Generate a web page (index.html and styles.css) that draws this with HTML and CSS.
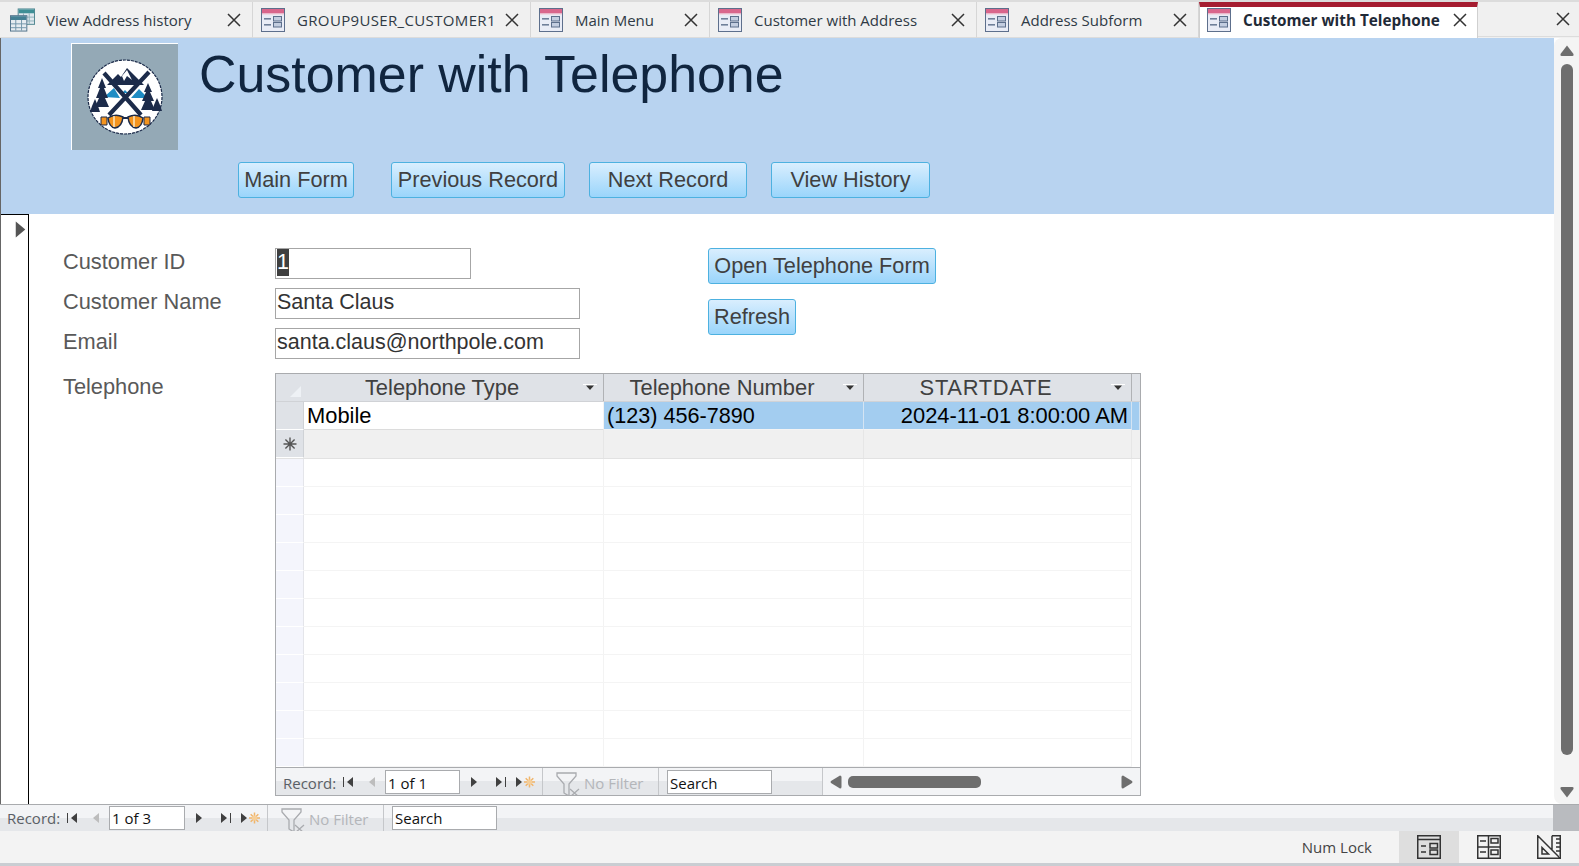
FILE: index.html
```html
<!DOCTYPE html>
<html lang="en">
<head>
<meta charset="utf-8">
<title>Customer with Telephone</title>
<link rel="stylesheet" href="styles.css">
</head>
<body>
<svg class="defs" width="0" height="0" aria-hidden="true">
  <defs>
    <symbol id="i-form" viewBox="0 0 24 24">
      <rect x="0.5" y="0.5" width="23" height="23" fill="#e9ecf6" stroke="#5d6f8c"/>
      <rect x="1" y="1" width="22" height="4.5" fill="#d9668c"/>
      <rect x="1" y="5.5" width="22" height="1" fill="#f3c6d4"/>
      <rect x="3" y="10" width="7" height="1.6" fill="#6f7f99"/>
      <rect x="3" y="16" width="7" height="1.6" fill="#6f7f99"/>
      <rect x="12.5" y="8.5" width="8" height="4.5" fill="#c3cde0" stroke="#5d6f8c"/>
      <rect x="12.5" y="14.5" width="8" height="4.5" fill="#c3cde0" stroke="#5d6f8c"/>
    </symbol>
    <symbol id="i-table" viewBox="0 0 26 24">
      <rect x="8.5" y="0.5" width="17" height="16" fill="#dfe8ee" stroke="#4f8690"/>
      <rect x="9" y="1" width="16" height="4" fill="#3f8f96"/>
      <path d="M9 9h16M9 13h16M14 5v11M20 5v11" stroke="#8fb0ba" fill="none"/>
      <rect x="0.5" y="7.5" width="17" height="16" fill="#e6ecf1" stroke="#50728a"/>
      <rect x="1" y="8" width="16" height="4" fill="#437f93"/>
      <path d="M1 16h16M1 20h16M6 12v11M12 12v11" stroke="#7396ab" fill="none"/>
    </symbol>
    <symbol id="i-close" viewBox="0 0 14 14">
      <path d="M1 1L13 13M13 1L1 13" stroke="#333" stroke-width="1.5" fill="none"/>
    </symbol>
    <symbol id="i-first" viewBox="0 0 12 12">
      <rect x="0" y="1" width="1" height="10" fill="currentColor"/>
      <path d="M10 1L4 6L10 11Z" fill="currentColor"/>
    </symbol>
    <symbol id="i-prev" viewBox="0 0 12 12">
      <path d="M9 1L3 6L9 11Z" fill="currentColor"/>
    </symbol>
    <symbol id="i-next" viewBox="0 0 12 12">
      <path d="M3 1L9 6L3 11Z" fill="currentColor"/>
    </symbol>
    <symbol id="i-last" viewBox="0 0 12 12">
      <path d="M1 1L7 6L1 11Z" fill="currentColor"/>
      <rect x="10" y="1" width="1" height="10" fill="currentColor"/>
    </symbol>
    <symbol id="i-new" viewBox="0 0 20 12">
      <path d="M0 1L6 6L0 11Z" fill="#404040"/>
      <path d="M13.5 0.5v11M8 6h11M9.7 2.2l7.6 7.6M17.3 2.2l-7.6 7.6" stroke="#f0b56b" stroke-width="1.5" fill="none"/>
      <circle cx="13.5" cy="6" r="2.6" fill="#f6cf99"/>
    </symbol>
    <symbol id="i-filter" viewBox="0 0 25 25">
      <path d="M1 1H20V4L13 12V24L8 21V12L1 4Z" fill="none" stroke="#a9abaf" stroke-width="1.3"/>
      <path d="M14 17L23 25M23 17L14 25" stroke="#a9abaf" stroke-width="1.3" fill="none"/>
    </symbol>
    <symbol id="i-star" viewBox="0 0 14 14">
      <path d="M7 0.5v13M0.5 7h13M2.4 2.4l9.2 9.2M11.6 2.4l-9.2 9.2" stroke="#555" stroke-width="1.4" fill="none"/>
    </symbol>
    <symbol id="i-sort" viewBox="0 0 14 8">
      <rect x="0" y="0" width="14" height="1" fill="#fff"/>
      <path d="M3 1.5H11L7 6Z" fill="#333"/>
    </symbol>
    <symbol id="i-hleft" viewBox="0 0 12 14">
      <path d="M10 0.5Q11.5 0.5 11.5 2V12Q11.5 13.5 10 13.5L1 8Q0 7 1 6Z" fill="currentColor"/>
    </symbol>
    <symbol id="i-hright" viewBox="0 0 12 14">
      <path d="M2 0.5Q.5 0.5 .5 2V12Q.5 13.5 2 13.5L11 8Q12 7 11 6Z" fill="currentColor"/>
    </symbol>
    <symbol id="i-up" viewBox="0 0 14 12"><path d="M7 .5L13.5 9Q14 11 12.5 11H1.5Q0 11 .5 9Z" fill="#6e6e6e"/></symbol>
    <symbol id="i-down" viewBox="0 0 14 12"><path d="M7 11.5L13.5 3Q14 1 12.5 1H1.5Q0 1 .5 3Z" fill="#6e6e6e"/></symbol>
  </defs>
</svg>

<div class="app">
  <nav class="tabs">
    <div class="tab tab-1"><svg class="tab-icon tab-icon-wide"><use href="#i-table"/></svg><span class="tab-text">View Address history</span><svg class="tab-x"><use href="#i-close"/></svg></div>
    <div class="tab tab-2"><svg class="tab-icon"><use href="#i-form"/></svg><span class="tab-text">GROUP9USER_CUSTOMER1</span><svg class="tab-x"><use href="#i-close"/></svg></div>
    <div class="tab tab-3"><svg class="tab-icon"><use href="#i-form"/></svg><span class="tab-text">Main Menu</span><svg class="tab-x"><use href="#i-close"/></svg></div>
    <div class="tab tab-4"><svg class="tab-icon"><use href="#i-form"/></svg><span class="tab-text">Customer with Address</span><svg class="tab-x"><use href="#i-close"/></svg></div>
    <div class="tab tab-5"><svg class="tab-icon"><use href="#i-form"/></svg><span class="tab-text">Address Subform</span><svg class="tab-x"><use href="#i-close"/></svg></div>
    <div class="tab tab-6 tab-active"><svg class="tab-icon"><use href="#i-form"/></svg><span class="tab-text">Customer with Telephone</span><svg class="tab-x"><use href="#i-close"/></svg></div>
    <div class="tabs-rest"><svg class="tab-x"><use href="#i-close"/></svg></div>
  </nav>

  <div class="workspace">
    <main class="form">
      <header class="form-header">
        <svg class="logo" viewBox="0 0 107 107" role="img" aria-label="Ski logo">
          <rect width="107" height="107" fill="#94a9b6"/>
          <path d="M0 .5H107M.5 0V107" stroke="#fff" fill="none"/>
          <circle cx="54" cy="54" r="37" fill="#fff" stroke="#1c2b4a" stroke-width="1.2" stroke-dasharray="3 1"/>
          <path d="M56 25L73 42H36L47 31L50 34Z" fill="#1c2b4a"/>
          <path d="M56 27L61 37L56 33L53 38L51 33Z" fill="#fff"/>
          <path d="M33 54L43 45L49 55ZM60 55L68 46L77 55ZM51 50L54 47L57 50Z" fill="#1e8cc4"/>
          <path d="M31 35L35 45L33 45L37 55L34 55L38 64H24L28 55L25 55L29 45L27 45Z" fill="#1c2b4a"/>
          <path d="M77 40L81 49L79 49L83 58L80 58L84 67H70L74 58L71 58L75 49L73 49Z" fill="#1c2b4a"/>
          <path d="M24 56L27 63L29 69H19L21 63Z" fill="#1c2b4a"/>
          <path d="M86 55L89 62L91 68H81L83 62Z" fill="#1c2b4a"/>
          <path d="M33 30L70 72M78 29L38 72" stroke="#1c2b4a" stroke-width="4.2" fill="none"/>
          <path d="M30 74H36V82H30ZM73 74H79V82H73Z" fill="#f4941e" stroke="#1c2b4a"/>
          <path d="M37 75Q44 70 52 74Q51 84 44 85Q38 84 37 75ZM72 75Q65 70 57 74Q58 84 65 85Q71 84 72 75Z" fill="#f4941e" stroke="#1c2b4a" stroke-width="1.5"/>
          <path d="M52 75H57" stroke="#1c2b4a" stroke-width="2"/>
          <path d="M43 73V84M63 73V84" stroke="#fbe2b8" stroke-width="1.6"/>
        </svg>
        <div class="header-main">
          <h1 class="form-title">Customer with Telephone</h1>
          <div class="header-buttons">
            <button class="btn btn-main">Main Form</button>
            <button class="btn btn-prev">Previous Record</button>
            <button class="btn btn-next">Next Record</button>
            <button class="btn btn-hist">View History</button>
          </div>
        </div>
      </header>

      <div class="detail">
        <div class="record-selector"><svg class="selector-arrow"><use href="#i-next"/></svg></div>
        <div class="detail-body">
          <div class="detail-top">
            <div class="fields">
              <div class="field"><label class="field-label">Customer ID</label><div class="input input-id"><span class="selected">1</span></div></div>
              <div class="field"><label class="field-label">Customer Name</label><div class="input">Santa Claus</div></div>
              <div class="field"><label class="field-label">Email</label><div class="input">santa.claus@northpole.com</div></div>
            </div>
            <div class="actions">
              <button class="btn btn-open">Open Telephone Form</button>
              <button class="btn btn-refresh">Refresh</button>
            </div>
          </div>
          <div class="sub-row">
            <div class="field-label">Telephone</div>
            <div class="subform">
              <div class="grid-row grid-head">
                <div class="sel sel-head"><span class="corner"></span></div>
                <div class="col-head"><span class="col-title">Telephone Type</span><svg class="sort"><use href="#i-sort"/></svg></div>
                <div class="col-head"><span class="col-title">Telephone Number</span><svg class="sort"><use href="#i-sort"/></svg></div>
                <div class="col-head"><span class="col-title col-date">STARTDATE</span><svg class="sort"><use href="#i-sort"/></svg></div>
                <div class="col-end"></div>
              </div>
              <div class="grid-row row-data">
                <div class="sel"></div>
                <div class="cell cell-white">Mobile</div>
                <div class="cell cell-sel cell-phone">(123) 456-7890</div>
                <div class="cell cell-sel cell-right">2024-11-01 8:00:00 AM</div>
                <div class="cell-sel"></div>
              </div>
              <div class="grid-row row-new">
                <div class="sel"><svg class="star"><use href="#i-star"/></svg></div>
                <div class="cell"></div><div class="cell"></div><div class="cell"></div><div></div>
              </div>
              <div class="grid-row"><div class="sel-empty"></div><div class="cell"></div><div class="cell"></div><div class="cell"></div><div></div></div>
              <div class="grid-row"><div class="sel-empty"></div><div class="cell"></div><div class="cell"></div><div class="cell"></div><div></div></div>
              <div class="grid-row"><div class="sel-empty"></div><div class="cell"></div><div class="cell"></div><div class="cell"></div><div></div></div>
              <div class="grid-row"><div class="sel-empty"></div><div class="cell"></div><div class="cell"></div><div class="cell"></div><div></div></div>
              <div class="grid-row"><div class="sel-empty"></div><div class="cell"></div><div class="cell"></div><div class="cell"></div><div></div></div>
              <div class="grid-row"><div class="sel-empty"></div><div class="cell"></div><div class="cell"></div><div class="cell"></div><div></div></div>
              <div class="grid-row"><div class="sel-empty"></div><div class="cell"></div><div class="cell"></div><div class="cell"></div><div></div></div>
              <div class="grid-row"><div class="sel-empty"></div><div class="cell"></div><div class="cell"></div><div class="cell"></div><div></div></div>
              <div class="grid-row"><div class="sel-empty"></div><div class="cell"></div><div class="cell"></div><div class="cell"></div><div></div></div>
              <div class="grid-row"><div class="sel-empty"></div><div class="cell"></div><div class="cell"></div><div class="cell"></div><div></div></div>
              <div class="grid-row"><div class="sel-empty"></div><div class="cell"></div><div class="cell"></div><div class="cell"></div><div></div></div>
              <div class="nav nav-sub">
                <span class="nav-label">Record:</span>
                <svg class="nav-ic ic-first"><use href="#i-first"/></svg>
                <svg class="nav-ic ic-prev"><use href="#i-prev"/></svg>
                <div class="nav-input nav-pos">1 of 1</div>
                <svg class="nav-ic ic-next"><use href="#i-next"/></svg>
                <svg class="nav-ic ic-last"><use href="#i-last"/></svg>
                <svg class="nav-new"><use href="#i-new"/></svg>
                <div class="nav-filter"><svg class="filter-ic"><use href="#i-filter"/></svg><span class="filter-text">No Filter</span></div>
                <div class="nav-input nav-search">Search</div>
                <div class="hscroll">
                  <svg class="hs-arrow"><use href="#i-hleft"/></svg>
                  <div class="hs-track"><div class="hs-thumb"></div></div>
                  <svg class="hs-arrow"><use href="#i-hright"/></svg>
                </div>
              </div>
            </div>
          </div>
        </div>
      </div>
    </main>
    <aside class="vscroll">
      <svg class="vs-arrow"><use href="#i-up"/></svg>
      <div class="vs-thumb"></div>
      <svg class="vs-arrow"><use href="#i-down"/></svg>
    </aside>
  </div>

  <div class="nav nav-main">
    <span class="nav-label">Record:</span>
    <svg class="nav-ic ic-first"><use href="#i-first"/></svg>
    <svg class="nav-ic ic-prev"><use href="#i-prev"/></svg>
    <div class="nav-input nav-pos">1 of 3</div>
    <svg class="nav-ic ic-next"><use href="#i-next"/></svg>
    <svg class="nav-ic ic-last"><use href="#i-last"/></svg>
    <svg class="nav-new"><use href="#i-new"/></svg>
    <div class="nav-filter"><svg class="filter-ic"><use href="#i-filter"/></svg><span class="filter-text">No Filter</span></div>
    <div class="nav-input nav-search">Search</div>
    <div class="nav-spacer"></div>
    <div class="nav-corner"></div>
  </div>

  <footer class="status">
    <span class="status-text">Num Lock</span>
    <div class="view-btn view-active">
      <svg class="view-ic" viewBox="0 0 24 24"><path d="M.75.75H23.25V23.25H.75ZM.75 4.5H23.25M4 11H9M4 17H9M13 8.5H20.5V13H13ZM13 15H20.5V19.5H13Z" fill="none" stroke="#333" stroke-width="1.5"/></svg>
    </div>
    <div class="view-btn">
      <svg class="view-ic" viewBox="0 0 24 24"><path d="M.75.75H23.25V23.25H.75ZM11.5.75V23.25M.75 12H23.25M3 6H9M3 17H9M14 3.5H21V8H14ZM14 15H21V19.5H14Z" fill="none" stroke="#333" stroke-width="1.5"/></svg>
    </div>
    <div class="view-btn">
      <svg class="view-ic" viewBox="0 0 24 24"><path d="M.75.75L23.25 23.25H.75ZM5 12.5L11.5 19H5ZM15 .75H23.25V23.25M15 .75V15M19 4H23M19 8H23M19 12H23M19 16H23" fill="none" stroke="#333" stroke-width="1.5"/></svg>
    </div>
  </footer>
</div>
</body>
</html>
```

FILE: styles.css
```css
* { box-sizing: border-box; }
html, body { margin: 0; padding: 0; height: 100%; background: #fff; overflow: hidden; }
.defs { position: absolute; }

.app {
  width: 1579px;
  height: 866px;
  display: flex;
  flex-direction: column;
  font-family: "Liberation Sans", Arial, sans-serif;
  background: #fff;
  border-bottom: 3px solid #c9cdd2;
}

/* Tabs */
.tabs {
  height: 38px;
  flex: none;
  display: flex;
  background: #f0f0f0;
  border-top: 2px solid #dcdcdc;
  font-family: "Open Sans", "Noto Sans", sans-serif;
  font-size: 15px;
  color: #2f3a45;
}
.tab {
  display: flex;
  align-items: center;
  height: 36px;
  border-right: 1px solid #d6d6d6;
  border-bottom: 1px solid #dcdcdc;
  padding-left: 8px;
  flex: none;
}
.tab-1 { width: 253px; padding-left: 10px; }
.tab-2 { width: 278px; letter-spacing: 0.35px; }
.tab-3 { width: 179px; }
.tab-4 { width: 267px; }
.tab-5 { width: 222px; }
.tab-6 { width: 279px; padding-left: 7px; }
.tab-icon { width: 24px; height: 24px; flex: none; }
.tab-icon-wide { width: 25px; margin-right: 11px; }
.tab-text { margin-left: 12px; white-space: nowrap; flex: 1; }
.tab-1 .tab-text { margin-left: 0; }
.tab-x { width: 14px; height: 14px; flex: none; margin-right: 11px; }
.tab-active {
  background: #fff;
  border-top: 5px solid #a51c30;
  border-left: 1px solid #d0d0d0;
  border-right: 1px solid #d0d0d0;
  border-bottom: none;
  height: 36px;
  font-weight: 700;
  font-size: 15.3px;
  color: #1f2a37;
}
.tab-active .tab-icon,
.tab-active .tab-text { margin-top: -6px; }
.tab-active .tab-x { margin-top: -6px; margin-right: 10px; }
.tabs-rest {
  flex: 1;
  height: 35px;
  border-bottom: 1px solid #dcdcdc;
  display: flex;
  align-items: center;
  justify-content: flex-end;
}
.tabs-rest .tab-x { margin-right: 9px; }

/* Workspace */
.workspace { flex: none; height: 766px; display: flex; }
.form {
  width: 1554px;
  flex: none;
  display: flex;
  flex-direction: column;
  border-left: 1px solid #666;
}
.form-header {
  height: 176px;
  flex: none;
  display: flex;
  background: #b8d3f0;
  padding: 5px 0 0 70px;
}
.logo { width: 107px; height: 107px; flex: none; display: block; }
.header-main { margin-left: 21px; display: flex; flex-direction: column; }
.form-title {
  margin: 1px 0 0;
  font-size: 51.9px;
  font-weight: 400;
  line-height: 60px;
  color: #10253f;
  white-space: nowrap;
}
.header-buttons { display: flex; margin: 58px 0 0 39px; }

.btn {
  height: 36px;
  padding: 0;
  border: 1px solid #4db1e0;
  border-radius: 3px;
  background: linear-gradient(#d9eefe, #9ad5fb);
  color: #404040;
  font-family: "Liberation Sans", Arial, sans-serif;
  font-size: 21.7px;
  text-align: center;
  white-space: nowrap;
}
.btn-main { width: 116px; }
.btn-prev { width: 174px; margin-left: 37px; }
.btn-next { width: 158px; margin-left: 24px; }
.btn-hist { width: 159px; margin-left: 24px; }
.btn-open { width: 228px; }
.btn-refresh { width: 88px; }

.detail { flex: 1; display: flex; min-height: 0; }
.record-selector {
  width: 28px;
  flex: none;
  border-top: 1px solid #000;
  border-right: 1px solid #000;
  padding: 5px 0 0 10px;
}
.selector-arrow { width: 19px; height: 19px; color: #555; display: block; }
.detail-body { flex: 1; padding: 34px 0 0 34px; min-width: 0; }
.detail-top { display: flex; height: 125px; }
.fields { width: 645px; flex: none; display: flex; flex-direction: column; gap: 9px; }
.field { display: flex; align-items: flex-start; height: 31px; }
.field-label {
  width: 212px;
  flex: none;
  font-size: 21.8px;
  line-height: 26px;
  padding-top: 1px;
  color: #595959;
}
.input {
  width: 305px;
  height: 31px;
  border: 1px solid #a6a6a6;
  padding: 0 1px;
  font-size: 21.5px;
  line-height: 27px;
  color: #333;
  white-space: nowrap;
}
.input-id { width: 196px; }
.selected { background: #3f3f3f; color: #fff; display: inline-block; height: 27px; line-height: 27px; }
.actions { display: flex; flex-direction: column; align-items: flex-start; gap: 15px; }

.sub-row { display: flex; }
.subform {
  width: 866px;
  height: 423px;
  border: 1px solid #a9abae;
  display: flex;
  flex-direction: column;
  flex: none;
}
.grid-row {
  display: grid;
  grid-template-columns: 28px 300px 260px 268px 1fr;
  height: 28px;
  flex: none;
  font-size: 21.9px;
}
.grid-head { background: #dfe2e7; color: #404040; border-bottom: 1px solid #d0d2d6; }
.sel { background: #dfe2e7; border-bottom: 1px solid #fff; border-right: 1px solid #cfd2d6; display: flex; align-items: center; justify-content: center; }
.sel-head { border-bottom: none; border-right: none; align-items: flex-end; justify-content: flex-end; padding: 0 3px 4px 0; }
.corner { width: 0; height: 0; border-left: 11px solid transparent; border-bottom: 11px solid #eef1f5; }
.col-head { display: flex; align-items: center; border-right: 1px solid #b0b2b5; line-height: 26px; }
.col-title { flex: 1; text-align: center; white-space: nowrap; padding-left: 3px; }
.col-date { letter-spacing: 0.7px; }
.sort { width: 14px; height: 8px; flex: none; margin: 0 6px; }
.col-end { background: #dfe2e7; }
.cell { border-right: 1px solid #f3f3f3; border-bottom: 1px solid #f4f4f4; padding: 0 3px; line-height: 27px; color: #000; white-space: nowrap; }
.cell-white { background: #fff; border-bottom-color: #dcdcdc; }
.cell-sel { background: #a3cdf0; border-right: 1px solid #d4e4f3; }
.cell-phone { font-size: 21.6px; padding-left: 3px; }
.cell-right { text-align: right; }
.row-new { height: 29px; background: #f0f0f0; border-bottom: 1px solid #e2e2e2; }
.row-new .cell { border-bottom: none; border-right-color: #e6e6e6; }
.star { width: 14px; height: 14px; display: block; }
.sel-empty { background: #f4f5fc; border-bottom: 1px solid #fff; border-right: 1px solid #e4e5ea; }

/* Navigation bars */
.nav {
  display: flex;
  align-items: center;
  background: linear-gradient(#f3f4f6 0, #f3f4f6 50%, #e5e7ea 50%, #e5e7ea 100%);
  font-family: "Open Sans", "Noto Sans", sans-serif;
  font-size: 15px;
  color: #5a5f66;
  flex: none;
}
.nav-sub { height: 28px; border-top: 1px solid #a9abae; margin-top: auto; padding-left: 7px; }
.nav-main { height: 27px; border-top: 1px solid #a9abae; padding-left: 7px; }
.nav-label { width: 59px; flex: none; white-space: nowrap; }
.nav-sub .nav-label { padding-top: 3px; }
.nav-ic { width: 12px; height: 12px; flex: none; color: #404040; }
.ic-first { margin-left: 1px; }
.ic-prev { margin-left: 11px; color: #bdbdbd; }
.nav-input {
  background: #fff;
  border: 1px solid #a9abae;
  height: 24px;
  line-height: 22px;
  color: #111;
  padding: 0 2px;
  white-space: nowrap;
  flex: none;
}
.nav-sub .nav-input { line-height: 24px; }
.nav-pos { width: 75px; margin-left: 7px; }
.nav-main .nav-pos { width: 76px; }
.ic-next { margin-left: 8px; }
.ic-last { margin-left: 15px; }
.nav-new { width: 20px; height: 12px; flex: none; margin-left: 9px; }
.nav-filter {
  display: flex;
  align-items: flex-end;
  height: 100%;
  border-left: 1px solid #c5c7ca;
  border-right: 1px solid #c5c7ca;
  margin-left: 6px;
  padding-left: 13px;
  width: 117px;
  flex: none;
  overflow: hidden;
}
.filter-ic { width: 25px; height: 25px; flex: none; margin-bottom: -2px; }
.filter-text { color: #b4b6ba; margin-left: 3px; line-height: 24px; white-space: nowrap; }
.nav-search { width: 105px; margin-left: 8px; }
.nav-spacer { flex: 1; }
.nav-corner { width: 26px; height: 100%; background: #b9bbbf; flex: none; }

.hscroll {
  margin-left: 50px;
  flex: 1;
  height: 100%;
  background: #f3f4f6;
  border-left: 1px solid #c5c7ca;
  display: flex;
  align-items: center;
  padding: 0 7px;
}
.hs-arrow { width: 12px; height: 14px; color: #6e6e6e; flex: none; }
.hs-track { flex: 1; padding: 0 2px; }
.hs-thumb { width: 133px; height: 12px; background: #6e6e6e; border-radius: 5px; margin-left: 4px; }

/* Vertical scrollbar */
.vscroll {
  width: 25px;
  flex: none;
  background: #f4f4f4;
  border-radius: 8px 0 0 8px;
  display: flex;
  flex-direction: column;
  align-items: center;
  padding: 7px 0 6px;
}
.vs-arrow { width: 14px; height: 12px; flex: none; }
.vs-thumb { flex: 1; width: 12px; background: #6e6e6e; border-radius: 6px; margin: 7px 0 31px; }

/* Status bar */
.status {
  flex: 1;
  display: flex;
  align-items: stretch;
  justify-content: flex-end;
  background: #f3f3f3;
  font-family: "Open Sans", "Noto Sans", sans-serif;
  font-size: 15px;
  color: #444;
}
.status-text { align-self: center; margin-right: 27px; }
.view-btn { width: 60px; display: flex; align-items: center; justify-content: center; }
.view-active { background: #dedede; }
.view-ic { width: 24px; height: 24px; display: block; }
```
